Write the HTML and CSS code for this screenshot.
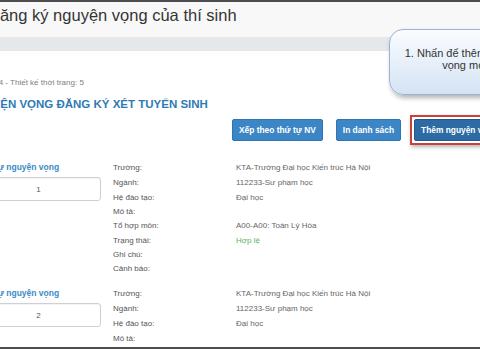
FILE: index.html
```html
<!DOCTYPE html>
<html lang="vi">
<head>
  <meta charset="UTF-8">
  <meta name="viewport" content="width=device-width, initial-scale=1.0">
  <title>Đăng ký nguyện vọng của thí sinh</title>
  <link rel="stylesheet" href="styles.css">
</head>
<body>
  <div class="frame">
    <div class="page-head">
      <h1 class="page-title">Đăng ký nguyện vọng của thí sinh</h1>
    </div>
    <div class="band"></div>

    <div class="content">
      <p class="subtitle">7210404 - Thiết kế thời trang: 5</p>
      <h2 class="section-title">NGUYỆN VỌNG ĐĂNG KÝ XÉT TUYỂN SINH</h2>

      <div class="toolbar">
        <button class="btn">Xếp theo thứ tự NV</button>
        <button class="btn">In danh sách</button>
        <span class="highlight"><button class="btn btn-dark">Thêm nguyện vọng</button></span>
      </div>

      <div class="wish">
        <div class="wish-order">
          <div class="wish-label">Thứ tự nguyện vọng</div>
          <div class="order-box">1</div>
        </div>
        <dl class="wish-info">
          <dt>Trường:</dt><dd>KTA-Trường Đại học Kiến trúc Hà Nội</dd>
          <dt>Ngành:</dt><dd>112233-Sư phạm học</dd>
          <dt>Hệ đào tạo:</dt><dd>Đại học</dd>
          <dt class="tight">Mô tả:</dt><dd class="tight"></dd>
          <dt>Tổ hợp môn:</dt><dd>A00-A00: Toán Lý Hóa</dd>
          <dt>Trạng thái:</dt><dd class="ok">Hợp lệ</dd>
          <dt class="tight">Ghi chú:</dt><dd class="tight"></dd>
          <dt>Cảnh báo:</dt><dd></dd>
        </dl>
      </div>

      <div class="wish">
        <div class="wish-order">
          <div class="wish-label">Thứ tự nguyện vọng</div>
          <div class="order-box">2</div>
        </div>
        <dl class="wish-info">
          <dt>Trường:</dt><dd>KTA-Trường Đại học Kiến trúc Hà Nội</dd>
          <dt>Ngành:</dt><dd>112233-Sư phạm học</dd>
          <dt>Hệ đào tạo:</dt><dd>Đại học</dd>
          <dt>Mô tả:</dt><dd></dd>
        </dl>
      </div>
    </div>

    <div class="callout">1. Nhấn để thêm nguyện<br>vọng mới</div>
  </div>
</body>
</html>
```

FILE: styles.css
```css
body {
  margin: 0;
  font-family: "Liberation Sans", Arial, sans-serif;
  overflow: hidden;
}
.frame {
  position: relative;
  height: 349px;
  box-sizing: border-box;
  border-top: 2px solid #4d4d4d;
  border-bottom: 2px solid #4d4d4d;
  overflow: hidden;
  background: #fff;
}
.page-head {
  background: #f8f8f8;
  padding: 4px 0 13px;
}
.page-title {
  margin: 0 0 0 -12px;
  font-size: 16.5px;
  font-weight: normal;
  line-height: 18px;
  color: #353535;
  white-space: nowrap;
}
.band {
  height: 14px;
  background: #e5e8ea;
}
.content {
  margin-left: -24px;
  padding-top: 27px;
}
.subtitle {
  margin: 0 0 0 -4px;
  font-size: 8px;
  line-height: 10px;
  color: #808080;
}
.section-title {
  margin: 9px 0 0 -9px;
  font-size: 11.5px;
  line-height: 14px;
  color: #2f7ab5;
  white-space: nowrap;
}
.toolbar {
  display: flex;
  align-items: center;
  gap: 13px;
  height: 32px;
  margin-top: 3px;
  padding-left: 256px;
}
.btn {
  flex-shrink: 0;
  box-sizing: border-box;
  height: 22px;
  padding: 0 6px;
  border: 1px solid #2f75b3;
  border-radius: 2px;
  background: #3c86c6;
  color: #fff;
  font: bold 8.4px "Liberation Sans", Arial, sans-serif;
  white-space: nowrap;
}
.highlight {
  display: flex;
  flex-shrink: 0;
  margin-left: -4px;
  padding: 2px;
  border: 2px solid #c8413a;
  box-shadow: 1px 2px 4px rgba(0, 0, 0, 0.3);
}
.btn-dark {
  background: #2c6ba3;
  border-color: #245a8b;
}
.wish {
  display: grid;
  grid-template-columns: 125px 1fr;
  column-gap: 12px;
  margin-top: 14px;
}
.wish + .wish {
  margin-top: 10px;
}
.wish-label {
  font-size: 8.5px;
  font-weight: bold;
  line-height: 15px;
  color: #3a8bc4;
  white-space: nowrap;
}
.order-box {
  display: flex;
  align-items: center;
  justify-content: center;
  box-sizing: border-box;
  height: 24px;
  margin-top: 2px;
  border: 1px solid #d0d0d0;
  border-radius: 3px;
  box-shadow: inset 0 1px 1px rgba(0, 0, 0, 0.05);
  font-size: 8px;
  color: #555;
}
.wish-info {
  display: grid;
  grid-template-columns: 123px 1fr;
  margin: 0;
  font-size: 8px;
  line-height: 15px;
}
.wish-info dt {
  color: #555;
}
.wish-info dd {
  margin: 0;
  color: #666;
  white-space: nowrap;
}
.wish-info .tight {
  line-height: 13px;
}
.wish-info .ok {
  color: #5cb85c;
}
.callout {
  position: absolute;
  left: 389px;
  top: 27px;
  width: 152px;
  height: 66px;
  box-sizing: border-box;
  padding-top: 17px;
  border: 1px solid #9ab3d5;
  border-radius: 14px;
  background: linear-gradient(#fafcff, #d4e3f4);
  box-shadow: 2px 3px 5px rgba(0, 0, 0, 0.3);
  text-align: center;
  font-size: 11px;
  line-height: 12px;
  color: #333;
  white-space: nowrap;
}
```
